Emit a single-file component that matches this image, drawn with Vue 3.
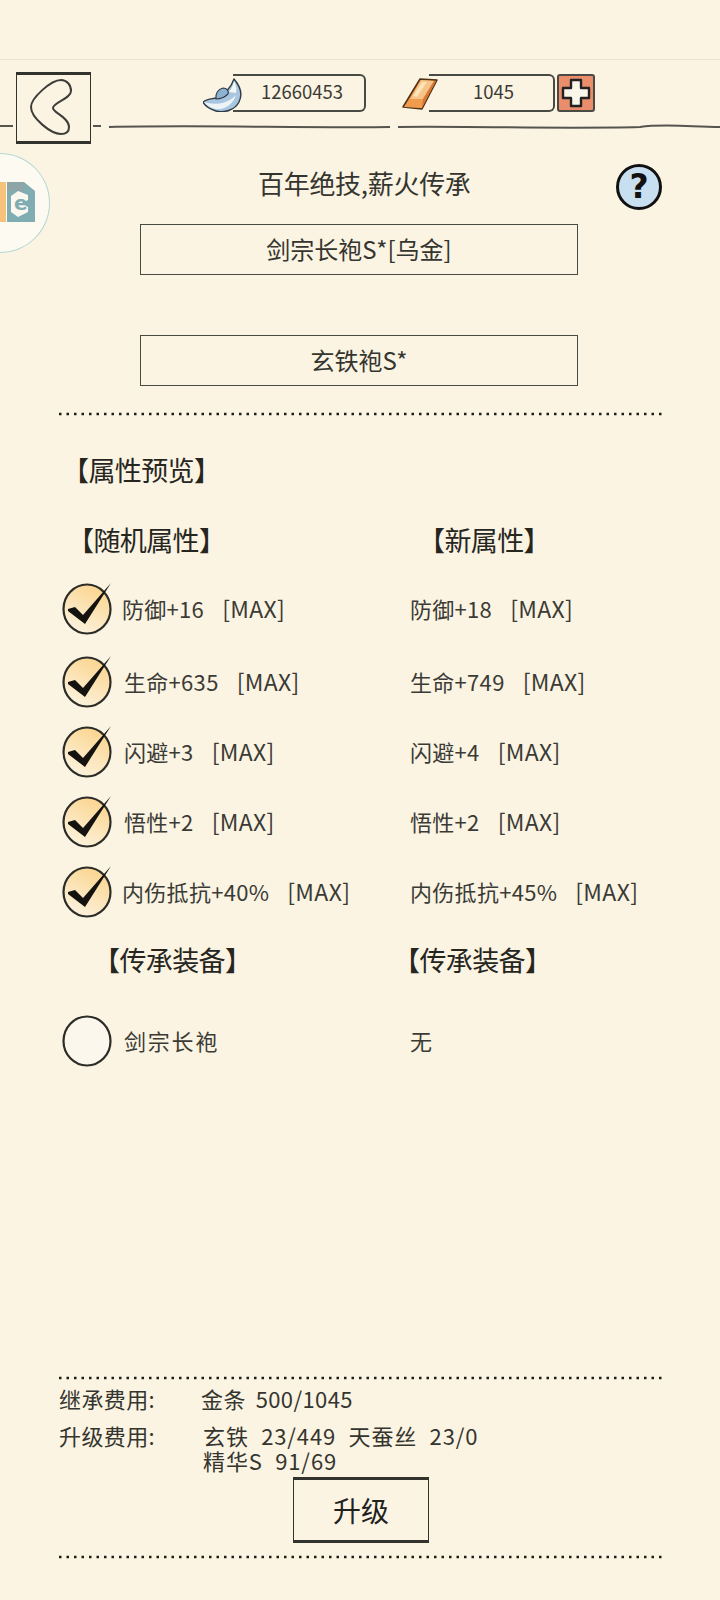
<script setup>
const rows = [
  { left: '防御+16', right: '防御+18', offset: 0 },
  { left: '生命+635', right: '生命+749', offset: 2 },
  { left: '闪避+3', right: '闪避+4', offset: 2 },
  { left: '悟性+2', right: '悟性+2', offset: 2 },
  { left: '内伤抵抗+40%', right: '内伤抵抗+45%', offset: 0 }
]
</script>

<template>
  <div class="page">
    <div class="top"></div>

    <header class="header">
      <svg class="wave" width="720" height="12" viewBox="0 0 720 12">
        <path d="M0 4H13M93 4H101M109 5C200 3 300 6 390 5M398 5C460 4 560 7 640 5 660 2 680 4 720 5" fill="none" stroke="#55544e" stroke-width="2"/>
      </svg>
      <button class="back">
        <svg width="50" height="60" viewBox="0 0 50 60">
          <path d="M35 2C41 2 45 7 45 13 45 21 27 24 27 30 27 35 43 39 43 49 43 54 40 56 35 56 25 56 5 40 5 29 5 20 25 2 35 2Z" fill="none" stroke="#3c3c38" stroke-width="2"/>
        </svg>
      </button>
      <div class="cur cur-a">
        <svg class="cur-icon" width="40" height="38" viewBox="0 0 40 38">
          <path d="M31 5C37 12 40 20 36 28 32 36 22 39 13 37 7 35 2 32 0 28 4 25 9 25 13 24 22 20 28 14 31 5Z" fill="#a8c6e0" stroke="#2f3a44" stroke-width="1.4" stroke-linejoin="round"/>
          <path d="M1 28C10 31 24 31 33 21 30 31 21 36 13 35 8 34 3 31 1 28Z" fill="#eef3f6"/>
          <path d="M13 25C12 20 15 15 20 14 24 14 26 17 25 20 22 23 17 25 13 25Z" fill="#8db2d2" stroke="#2f3a44" stroke-width="1.1"/>
          <path d="M26 18C29 14 30 11 31 7 33 11 34 15 33 19Z" fill="#f4f6f4"/>
        </svg>
        <div class="pill pill-a">12660453</div>
      </div>
      <div class="cur cur-b">
        <svg class="cur-icon" width="38" height="36" viewBox="0 0 38 36">
          <path d="M2 32L19 4L36 5L21 34Z" fill="#e98f3f" stroke="#4f3216" stroke-width="1.5" stroke-linejoin="round"/>
          <path d="M9 24L20 5L33 6L22 24Z" fill="#f6c489"/>
          <path d="M12 21L21 7L26 7L16 22Z" fill="#fbe3b5"/>
          <path d="M3 32L9 24H22L21 33Z" fill="#ef9c4e"/>
          <path d="M33 6L35 6L21 33L22 24Z" fill="#d9782f"/>
        </svg>
        <div class="pill pill-b">1045</div>
      </div>
      <button class="plus">
        <svg width="30" height="30" viewBox="0 0 30 30">
          <path d="M10 2H20V10H28V20H20V28H10V20H2V10H10Z" fill="#fbf6ea" stroke="#222" stroke-width="2.4" stroke-linejoin="round"/>
        </svg>
      </button>
    </header>

    <div class="logo">
      <svg width="50" height="100" viewBox="0 0 50 100">
        <path d="M0 29H6V69H0Z" fill="#f6c27c"/>
        <path d="M7 29H24L35 38V69H7Z" fill="#7fadb2"/>
        <path d="M7 29H24L25 38H7Z" fill="#8ea5a7"/>
        <path d="M11 43L18 38L28 42V47L22 50L28 54V59L18 64L11 59Z" fill="#fbf8f0"/>
        <text x="14" y="57" class="logo-e">e</text>
      </svg>
    </div>

    <div class="title-row">
      <h1 class="title">百年绝技,薪火传承</h1>
      <div class="help">?</div>
    </div>

    <div class="box">剑宗长袍S*[乌金]</div>
    <div class="box box-second">玄铁袍S*</div>

    <svg class="dots dots-a" width="720" height="4" viewBox="0 0 720 4">
      <line x1="59" y1="2" x2="664" y2="2"/>
    </svg>

    <h2 class="preview">【属性预览】</h2>

    <div class="heads">
      <div class="head head-l">【随机属性】</div>
      <div class="head head-r">【新属性】</div>
    </div>

    <div class="rows">
      <div v-for="r in rows" :key="r.left" class="row">
        <div class="cell-l">
          <svg class="check" width="56" height="56" viewBox="0 0 56 56">
            <defs>
              <linearGradient id="fillg" x1="0.8" y1="0" x2="0.3" y2="1">
                <stop offset="0" stop-color="#fbd38a"/>
                <stop offset="1" stop-color="#fcf3df"/>
              </linearGradient>
            </defs>
            <ellipse cx="27" cy="28" rx="23.5" ry="24.5" fill="url(#fillg)" stroke="#2c2c28" stroke-width="2.2"/>
            <path d="M8 28L15 26L23 34L51 2L25 43L8 30Z" fill="#14130f"/>
          </svg>
          <span class="txt" :style="{ marginLeft: r.offset + 'px' }">{{ r.left }}<span class="max">[MAX]</span></span>
        </div>
        <span class="txt">{{ r.right }}<span class="max">[MAX]</span></span>
      </div>
    </div>

    <div class="heads heads-inherit">
      <div class="head head-il">【传承装备】</div>
      <div class="head head-ir">【传承装备】</div>
    </div>

    <div class="row row-equip">
      <div class="cell-l">
        <svg class="check" width="56" height="56" viewBox="0 0 56 56">
          <ellipse cx="27" cy="28" rx="23.5" ry="24.5" fill="#fcf7ec" stroke="#2c2c28" stroke-width="2.2"/>
        </svg>
        <span class="txt equip-txt">剑宗长袍</span>
      </div>
      <span class="txt">无</span>
    </div>

    <svg class="dots dots-b" width="720" height="4" viewBox="0 0 720 4">
      <line x1="59" y1="2" x2="664" y2="2"/>
    </svg>

    <div class="fee fee-a">
      <span class="fee-label">继承费用:</span>
      <span class="fee-value">金条  500/1045</span>
    </div>
    <div class="fee fee-b">
      <span class="fee-label">升级费用:</span>
      <span class="fee-value">玄铁  23/449  天蚕丝  23/0<br>精华S  91/69</span>
    </div>

    <button class="upgrade">升级</button>

    <svg class="dots dots-c" width="720" height="4" viewBox="0 0 720 4">
      <line x1="59" y1="2" x2="664" y2="2"/>
    </svg>
  </div>
</template>

<style scoped>
.page {
  position: relative;
  width: 720px;
  height: 1600px;
  overflow: hidden;
  background: #fbf4e3;
  color: #35352f;
  font-family: "Noto Sans CJK SC", "Noto Sans", sans-serif;
}
.top {
  height: 59px;
  border-bottom: 1px solid #e9e3d3;
}
.header {
  position: relative;
  height: 84px;
  padding-top: 12px;
  box-sizing: border-box;
  display: flex;
  align-items: flex-start;
}
.wave {
  position: absolute;
  left: 0;
  top: 62px;
}
.back {
  position: relative;
  width: 75px;
  height: 72px;
  margin-left: 16px;
  padding: 0 0 0 9px;
  box-sizing: border-box;
  background: #fbf4e3;
  border: 1.5px solid #33332e;
  border-top-width: 3px;
  border-bottom-width: 3px;
  display: flex;
  align-items: center;
}
.cur {
  position: relative;
  display: flex;
  align-items: center;
  height: 38px;
  margin-top: 2px;
}
.cur-a { margin-left: 112px; }
.cur-b { margin-left: 35px; }
.cur-icon {
  position: relative;
  z-index: 1;
  margin-right: -10px;
}
.pill {
  height: 38px;
  box-sizing: border-box;
  border: 2px solid #4a4a44;
  border-left: none;
  border-radius: 0 6px 6px 0;
  font-size: 18.5px;
  line-height: 31px;
  text-align: center;
  color: #3b3b36;
}
.pill-a { width: 133px; padding-left: 7px; }
.pill-b { width: 126px; padding-left: 5px; }
.plus {
  width: 38px;
  height: 38px;
  margin-top: 2px;
  margin-left: 2px;
  padding: 0;
  box-sizing: border-box;
  background: #ea8d6b;
  border: 2px solid #4a4a44;
  border-radius: 3px;
  display: flex;
  align-items: center;
  justify-content: center;
}
.logo {
  position: absolute;
  left: 0;
  top: 153px;
  width: 50px;
  height: 100px;
  box-sizing: border-box;
  border: 1.5px solid #b5d7d4;
  border-left: none;
  border-radius: 0 50px 50px 0;
  background: #fdfaf2;
  overflow: hidden;
}
.logo svg { display: block; margin: -1.5px 0 0; }
.logo-e {
  font-family: "DejaVu Sans", sans-serif;
  font-size: 20px;
  font-weight: 700;
  fill: #7fadb2;
}
.title-row {
  position: relative;
  height: 80px;
  padding: 22px 0 0 258px;
  box-sizing: border-box;
}
.title {
  margin: 0;
  font-size: 26px;
  font-weight: 400;
  line-height: 34px;
  letter-spacing: -0.3px;
}
.help {
  position: absolute;
  left: 616px;
  top: 20px;
  width: 46px;
  height: 46px;
  box-sizing: border-box;
  border: 3px solid #111;
  border-radius: 50%;
  background: #c8dff0;
  color: #111;
  font-family: "DejaVu Sans", sans-serif;
  font-size: 33px;
  font-weight: 700;
  line-height: 39px;
  text-align: center;
}
.box {
  width: 438px;
  height: 51px;
  margin-left: 140px;
  box-sizing: border-box;
  border: 1.5px solid #4a4a44;
  font-size: 24px;
  line-height: 47px;
  text-align: center;
}
.box-second { margin-top: 60px; }
.dots {
  display: block;
}
.dots line {
  stroke: #1d1d19;
  stroke-width: 2.5;
  stroke-dasharray: 2.5 5;
}
.dots-a { margin-top: 26px; }
.dots-b { margin-top: 300px; }
.dots-c { margin-top: 12px; }
.preview {
  margin: 34px 0 0 58px;
  font-size: 27px;
  font-weight: 400;
  line-height: 40px;
  letter-spacing: -0.6px;
  padding-left: 4px;
  color: #26261f;
}
.heads {
  display: flex;
  margin-top: 30px;
  height: 40px;
}
.head {
  flex: none;
  width: 140px;
  font-size: 27px;
  line-height: 40px;
  letter-spacing: -0.6px;
  white-space: nowrap;
  color: #26261f;
}
.head-l { margin-left: 67px; }
.head-r { margin-left: 211px; }
.rows {
  margin-top: 14px;
}
.row {
  display: grid;
  grid-template-columns: 410px 1fr;
  align-items: center;
  height: 70px;
}
.row:first-child { margin-bottom: 3px; }
.cell-l {
  display: flex;
  align-items: center;
  padding-left: 60px;
}
.check {
  flex: none;
  margin-right: 6px;
}
.txt {
  padding-bottom: 3px;
  font-size: 22px;
  line-height: 30px;
  letter-spacing: 0.3px;
  white-space: pre;
  color: #3b3b36;
}
.max {
  margin-left: 18px;
  font-size: 23px;
}
.equip-txt { margin-left: 2px; letter-spacing: 1.8px; }
.heads-inherit { margin-top: 13px; }
.head-il { margin-left: 93px; }
.head-ir { margin-left: 160px; }
.row-equip { margin-top: 26px; }
.fee {
  display: flex;
  font-size: 22px;
  line-height: 25px;
  white-space: pre;
}
.fee-a { margin-top: 6px; letter-spacing: 0.4px; word-spacing: 4.5px; }
.fee-b { margin-top: 12px; letter-spacing: 0.9px; word-spacing: 6.5px; }
.fee-label {
  width: 142px;
  margin-left: 59px;
  flex: none;
  letter-spacing: 0.4px;
}
.fee-b .fee-value { margin-left: 2px; }
.upgrade {
  display: block;
  width: 136px;
  height: 66px;
  margin: 4px 0 0 293px;
  padding: 0;
  background: transparent;
  box-sizing: border-box;
  border: 1.5px solid #33332e;
  border-top-width: 3px;
  border-bottom-width: 3px;
  font-family: inherit;
  font-size: 28px;
  color: #22221e;
}
</style>

<style>
html, body { background: #fbf4e3; }
</style>
